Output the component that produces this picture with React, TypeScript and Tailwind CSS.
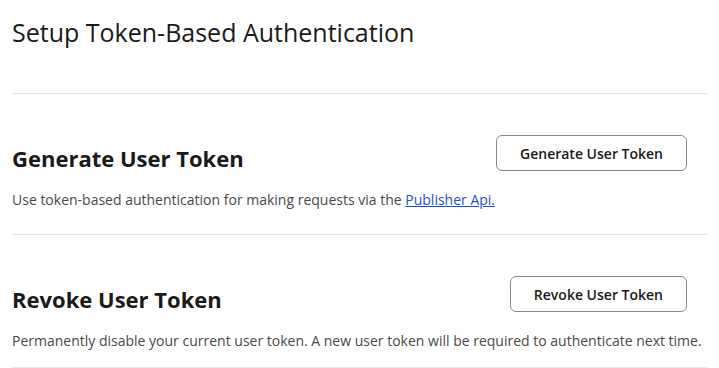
export default function App() {
  return (
    <div className="min-h-screen bg-white px-3 text-[#1a1a1a]" style={{ fontFamily: '"Open Sans", "Noto Sans", sans-serif' }}>
      <h1 className="pt-[16px] text-[25px] leading-[33px] font-normal">Setup Token-Based Authentication</h1>
      <div className="mt-[44px] h-px bg-[#e2e1ec]" />

      <section className="pt-[41px]">
        <div className="flex items-start justify-between pr-[20px]">
          <h2 className="mt-[10px] text-[22px] font-bold leading-[26px]">Generate User Token</h2>
          <button className="h-9 rounded-md border border-[#8a8a80] bg-white px-[23px] text-[14px] font-semibold text-[#1a1a1a]">
            Generate User Token
          </button>
        </div>
        <p className="mt-[19px] text-[14px] leading-5 text-[#4a4a4a]">
          Use token-based authentication for making requests via the{" "}
          <a href="#" className="text-[#1e4fd8] underline">Publisher Api.</a>
        </p>
        <div className="mt-[24px] h-px bg-[#e2e1ec]" />
      </section>

      <section className="pt-[41px]">
        <div className="flex items-start justify-between pr-[20px]">
          <h2 className="mt-[10px] text-[22px] font-bold leading-[26px]">Revoke User Token</h2>
          <button className="h-9 rounded-md border border-[#8a8a80] bg-white px-[23px] text-[14px] font-semibold text-[#1a1a1a]">
            Revoke User Token
          </button>
        </div>
        <p className="mt-[19px] text-[14px] leading-5 text-[#4a4a4a]">
          Permanently disable your current user token. A new user token will be required to authenticate next time.
        </p>
        <div className="mt-[16px] h-px bg-[#e5e5e5]" />
      </section>
    </div>
  );
}
